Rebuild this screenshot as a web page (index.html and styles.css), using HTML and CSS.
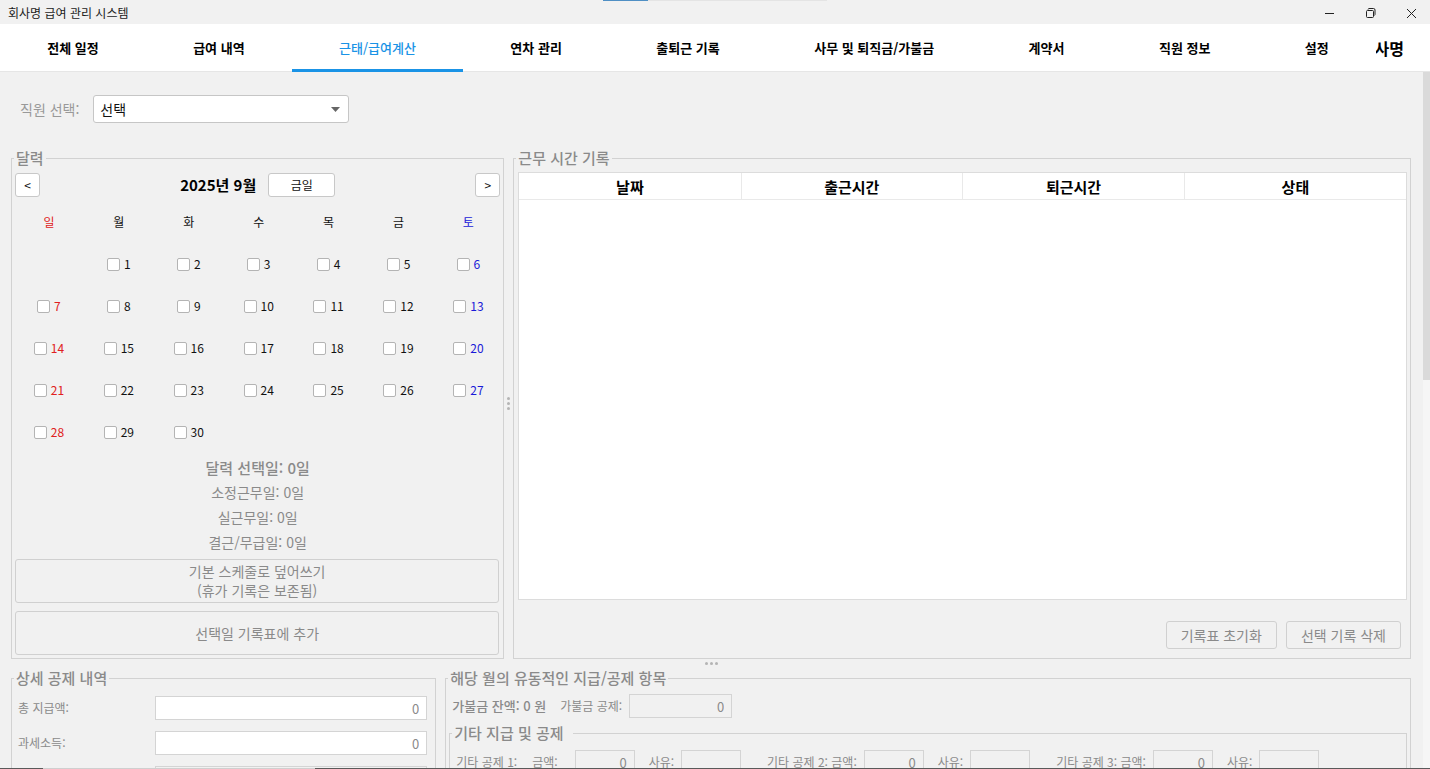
FILE: index.html
```html
<!DOCTYPE html>
<html lang="ko">
<head>
<meta charset="utf-8">
<title>회사명 급여 관리 시스템</title>
<link rel="stylesheet" href="styles.css">
</head>
<body>
<div class="window">
  <header class="titlebar">
    <span class="titlebar-text">회사명 급여 관리 시스템</span>
    <span class="titlebar-load"><i></i></span>
    <div class="window-buttons">
      <button type="button" aria-label="최소화"><svg viewBox="0 0 11 11"><path d="M1 5.5h9"/></svg></button>
      <button type="button" aria-label="이전 크기로"><svg viewBox="0 0 11 11"><path d="M1.500 3.500q0-1 1-1h5q1 0 1 1v5q0 1-1 1h-5q-1 0-1-1zM3 1.500q.3-1 1-1h4.500q1.500 0 1.500 1.500v4.500q0 .7-.5 1"/></svg></button>
      <button type="button" aria-label="닫기"><svg viewBox="0 0 11 11"><path d="M1 1l9 9M10 1l-9 9"/></svg></button>
    </div>
  </header>
  <nav class="tabs">
    <button type="button" class="tab">전체 일정</button>
    <button type="button" class="tab">급여 내역</button>
    <button type="button" class="tab tab-active">근태/급여계산</button>
    <button type="button" class="tab">연차 관리</button>
    <button type="button" class="tab">출퇴근 기록</button>
    <button type="button" class="tab">사무 및 퇴직금/가불금</button>
    <button type="button" class="tab">계약서</button>
    <button type="button" class="tab">직원 정보</button>
    <button type="button" class="tab">설정</button>
    <span class="brand"><span>회사명</span></span>
  </nav>
  <div class="viewport">
    <main class="content">
      <div class="employee">
        <label for="employee">직원 선택:</label>
        <span class="select-box">
          <select id="employee"><option>선택</option></select>
          <svg viewBox="0 0 9 5"><path d="M0 0h9L4.500 5z"/></svg>
        </span>
      </div>
      <div class="upper">
        <fieldset class="group calendar">
          <legend>달력</legend>
          <div class="month-bar">
            <button type="button" class="btn btn-nav" aria-label="이전 달">&lt;</button>
            <div class="month">
              <h2>2025년 9월</h2>
              <button type="button" class="btn btn-today">금일</button>
            </div>
            <button type="button" class="btn btn-nav" aria-label="다음 달">&gt;</button>
          </div>
          <div class="days" id="days">
            <span>일</span><span>월</span><span>화</span><span>수</span><span>목</span><span>금</span><span>토</span>
            <span></span>
          </div>
          <div class="stats">
            <p class="strong">달력 선택일: 0일</p>
            <p>소정근무일: 0일</p>
            <p>실근무일: 0일</p>
            <p>결근/무급일: 0일</p>
          </div>
          <div class="wide-buttons">
            <button type="button" class="btn-flat">기본 스케줄로 덮어쓰기<br>(휴가 기록은 보존됨)</button>
            <button type="button" class="btn-flat">선택일 기록표에 추가</button>
          </div>
        </fieldset>
        <div class="grip grip-vertical"><i></i><i></i><i></i></div>
        <fieldset class="group records">
          <legend>근무 시간 기록</legend>
          <div class="records-body">
            <div class="table-frame">
              <table>
                <thead><tr><th>날짜</th><th>출근시간</th><th>퇴근시간</th><th>상태</th></tr></thead>
                <tbody></tbody>
              </table>
            </div>
            <div class="record-buttons">
              <button type="button" class="btn-flat">기록표 초기화</button>
              <button type="button" class="btn-flat">선택 기록 삭제</button>
            </div>
          </div>
        </fieldset>
      </div>
      <div class="grip grip-horizontal"><i></i><i></i><i></i></div>
      <div class="lower">
        <fieldset class="group deductions">
          <legend>상세 공제 내역</legend>
          <div class="deduction-rows">
            <label for="gross">총 지급액:</label><input id="gross" class="field" value="0">
            <label for="taxable">과세소득:</label><input id="taxable" class="field" value="0">
            <span></span><input class="field field-off" aria-label="공제액">
          </div>
        </fieldset>
        <fieldset class="group variable">
          <legend>해당 월의 유동적인 지급/공제 항목</legend>
          <div class="advance">
            <strong>가불금 잔액: 0 원</strong>
            <label for="advance">가불금 공제:</label>
            <input id="advance" class="field field-off" value="0">
          </div>
          <fieldset class="group extra">
            <legend>기타 지급 및 공제</legend>
            <div class="extra-row">
              <div class="extra-item extra-first">
                <span>기타 공제 1:</span><label for="amount1">금액:</label><input id="amount1" class="field field-off" value="0">
                <label class="reason" for="reason1">사유:</label><input id="reason1" class="field field-off">
              </div>
              <div class="extra-item">
                <label for="amount2">기타 공제 2: 금액:</label><input id="amount2" class="field field-off" value="0">
                <label class="reason" for="reason2">사유:</label><input id="reason2" class="field field-off">
              </div>
              <div class="extra-item">
                <label for="amount3">기타 공제 3: 금액:</label><input id="amount3" class="field field-off" value="0">
                <label class="reason" for="reason3">사유:</label><input id="reason3" class="field field-off">
              </div>
            </div>
          </fieldset>
        </fieldset>
      </div>
    </main>
    <div class="scrollbar"><i></i></div>
  </div>
  <footer class="edge"><i></i></footer>
</div>
<script src="calendar.js"></script>
</body>
</html>
```

FILE: styles.css
```css
* { box-sizing: border-box; }

body {
  margin: 0;
  font-family: "Noto Sans CJK KR", "Noto Sans", sans-serif;
  font-size: 14px;
  line-height: 20px;
  color: #8a8a8a;
  background: #f1f1f1;
}

button, input, select { font: inherit; color: inherit; }
button { padding: 0; border: 0; background: none; }
h2, p { margin: 0; }

.window {
  display: flex;
  flex-direction: column;
  height: 100vh;
  overflow: hidden;
}

/* title bar */
.titlebar {
  display: grid;
  grid-template-columns: 1fr 224px 1fr;
  flex: none;
  height: 24px;
  font-size: 12px;
  color: #1a1a1a;
}
.titlebar-text { padding: 3px 8px; }
.titlebar-load { height: 1px; background: #e4e4e4; }
.titlebar-load i { display: block; width: 20%; height: 1px; background: #4f8fc4; }
.window-buttons { display: flex; justify-content: flex-end; gap: 3px; }
.window-buttons button { display: grid; place-items: center; width: 38px; }
.window-buttons svg { width: 11px; height: 11px; fill: none; stroke: #222; stroke-width: 1; }

/* tabs */
.tabs {
  display: flex;
  flex: none;
  height: 48px;
  background: #fff;
  border-bottom: 1px solid #e6e6e6;
}
.tab {
  flex: 1 1 auto;
  border-top: 3px solid transparent;
  border-bottom: 3px solid transparent;
  font-size: 13px;
  font-weight: 700;
  color: #000;
  white-space: nowrap;
  margin-bottom: -1px;
  padding: 0 44px;
}
.tab-active { color: #1a93e6; border-bottom-color: #1a93e6; font-weight: 500; }
.brand {
  display: flex;
  flex: none;
  justify-content: flex-end;
  align-items: center;
  width: 28px;
  margin-right: 26px;
  overflow: hidden;
  font-size: 16px;
  font-weight: 700;
  color: #000;
}
.brand span { flex: none; }

/* page */
.viewport { display: flex; flex: 1; min-height: 0; }
.content { flex: 1; min-width: 0; padding: 23px 12px 0 11px; overflow: hidden; }
.scrollbar { display: grid; grid-template-rows: 308fr 388fr; flex: none; width: 7px; background: #f6f6f6; }
.scrollbar i { background: #dadada; }
.edge { flex: none; height: 1px; background: #5a5a5a; }
.edge i { display: block; width: 19%; height: 1px; margin-left: 3%; background: #cfcfcf; }

.employee { display: flex; align-items: center; gap: 14px; padding-left: 9px; margin-bottom: 25px; color: #999; }
.select-box { position: relative; width: 256px; height: 28px; }
.select-box select {
  width: 100%;
  height: 100%;
  padding: 0 6px;
  appearance: none;
  background: #fff;
  border: 1px solid #c6c6c6;
  border-radius: 3px;
  color: #111;
}
.select-box svg { position: absolute; right: 9px; top: 12px; width: 9px; height: 5px; fill: #666; }

.group { min-width: 0; margin: 0; padding: 0; border: 1px solid #d2d2d2; }
.group > legend { margin-left: 2px; padding: 0 2px; font-size: 15px; font-weight: 500; height: 20px; }

.upper { display: grid; grid-template-columns: 493fr 9px 897fr; }

.grip { display: flex; align-items: center; justify-content: center; gap: 2px; }
.grip i { width: 3px; height: 3px; border-radius: 2px; background: #b4b4b4; }
.grip-vertical { flex-direction: column; }
.grip-horizontal { height: 9px; }

/* calendar */
.month-bar { display: flex; justify-content: space-between; padding: 5px 3px 0; }
.month { display: flex; align-items: center; gap: 12px; }
.month h2 { font-size: 15px; font-weight: 700; color: #000; }
.btn {
  height: 24px;
  background: #fff;
  border: 1px solid #c8c8c8;
  border-radius: 3px;
  font-size: 12px;
  color: #111;
}
.btn-nav { width: 25px; }
.btn-today { width: 67px; }

.days {
  display: grid;
  grid-template-columns: repeat(7, 1fr);
  grid-auto-rows: 42px;
  padding: 4px 0 0 2px;
  font-size: 12px;
  color: #111;
}
.days > * { display: flex; align-items: center; justify-content: center; gap: 4px; }
.days > :nth-child(7n + 1) { color: #e02020; }
.days > :nth-child(7n) { color: #1a1ad8; }
.days input {
  width: 13px;
  height: 13px;
  margin: 0;
  appearance: none;
  background: #fff;
  border: 1px solid #b4b4b4;
  border-radius: 2px;
}

.stats { padding: 2px 0 4px; text-align: center; line-height: 25px; }
.strong { font-size: 15px; font-weight: 500; }
.wide-buttons { display: grid; gap: 8px; padding: 0 4px 3px 3px; }
.wide-buttons .btn-flat { height: 44px; line-height: 19px; }
.btn-flat { border: 1px solid #d0d0d0; border-radius: 3px; }

/* work records */
.records-body { display: flex; flex-direction: column; height: 100%; padding: 4px 3px 9px 4px; }
.table-frame { flex: 1; background: #fff; border: 1px solid #dcdcdc; }
.table-frame table { width: 100%; table-layout: fixed; border-collapse: collapse; }
.table-frame th {
  height: 26px;
  padding: 3px 0 0;
  font-size: 15px;
  font-weight: 700;
  color: #000;
  border-right: 1px solid #e9e9e9;
  border-bottom: 1px solid #e9e9e9;
}
.table-frame th:last-child { border-right: 0; }
.record-buttons { display: flex; justify-content: flex-end; gap: 9px; padding: 21px 6px 0 0; }
.record-buttons .btn-flat { height: 28px; padding: 0 14px; }

/* lower groups */
.lower { display: grid; grid-template-columns: 425fr 965fr; gap: 9px; font-size: 12px; }
.field {
  width: 60px;
  height: 24px;
  padding: 0 7px;
  border: 1px solid #d4d4d4;
  border-radius: 0;
  background: #fff;
  font-size: 13px;
  text-align: right;
}
.field-off { background: #f1f1f1; }
.deduction-rows {
  display: grid;
  grid-template-columns: 137fr 273fr;
  align-items: center;
  row-gap: 11px;
  padding: 8px 8px 8px 6px;
}
.deduction-rows .field { width: 100%; }
.advance { display: flex; align-items: center; padding: 6px 6px 5px; }
.advance strong { margin-right: 14px; font-weight: 500; font-size: 13px; }
.advance label { margin-right: 7px; }
.advance .field { width: 103px; }
.extra { margin: 0 3px; }
.extra > legend { padding-right: 9px; }
.extra-row { display: flex; gap: 26px; padding: 7px 6px 20px; }
.extra-item { display: flex; align-items: center; gap: 7px; white-space: nowrap; }
.extra-first span { margin-right: 8px; }
.extra-first label:not(.reason) { margin-right: 10px; }
.reason { margin-left: 7px; }
```

FILE: calendar.js
```js
const days = document.getElementById('days');
for (let day = 1; day <= 30; day++) {
  const label = document.createElement('label');
  const box = document.createElement('input');
  box.type = 'checkbox';
  label.append(box, String(day));
  days.append(label);
}
```
